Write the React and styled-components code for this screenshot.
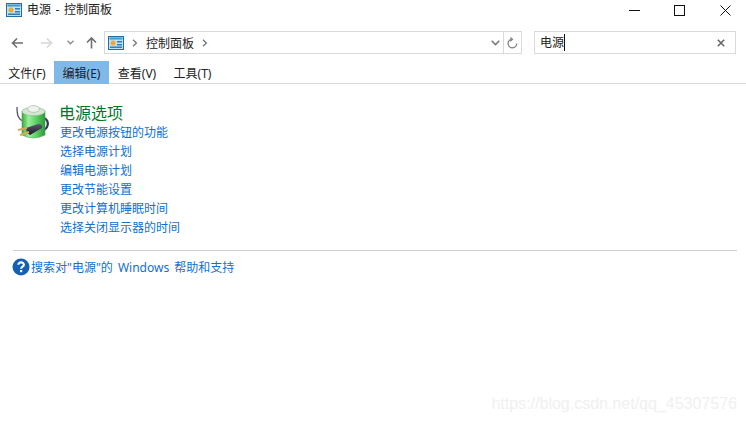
import styled, { createGlobalStyle } from "styled-components";

const GlobalStyle = createGlobalStyle`
  html, body {
    margin: 0;
    padding: 0;
    background: #fff;
  }
  body {
    font-family: "Noto Sans", "Noto Sans CJK SC", sans-serif;
    font-size: 12px;
    color: #1a1a1a;
  }
`;

const Window = styled.div`
  position: relative;
  width: 746px;
  height: 421px;
  overflow: hidden;
  background: #fff;
`;

const TitleBar = styled.div`
  display: flex;
  align-items: center;
  height: 20px;
  padding-left: 6px;
  gap: 5px;
`;

const TitleText = styled.span`
  font-size: 12px;
  line-height: 20px;
  color: #222;
  flex: 1;
  word-spacing: 1.5px;
`;

const WindowButtons = styled.div`
  display: flex;
  margin-right: -2px;
`;

const WindowButton = styled.div`
  width: 45.5px;
  height: 20px;
  display: flex;
  align-items: center;
  justify-content: center;
`;

const NavRow = styled.div`
  display: flex;
  align-items: center;
  height: 23px;
  margin-top: 11px;
`;

const NavArrows = styled.div`
  display: flex;
  align-items: center;
  flex: none;
  width: 104px;
  padding-left: 8px;
  box-sizing: border-box;
`;

const NavArrow = styled.div`
  width: ${(props) => props.w}px;
  margin-left: ${(props) => props.gap || 0}px;
  height: 23px;
  display: flex;
  align-items: center;
  justify-content: center;
`;

const AddressBox = styled.div`
  display: flex;
  align-items: center;
  width: 418px;
  height: 23px;
  box-sizing: border-box;
  border: 1px solid #d9d9d9;
  padding-left: 3px;
`;

const Crumb = styled.span`
  font-size: 12px;
  color: #222;
  margin: 0 8px;
`;

const Chevron = styled.svg`
  margin-left: ${(props) => props.gap || 0}px;
`;

const Spacer = styled.div`
  flex: 1;
`;

const RefreshCell = styled.div`
  width: 17px;
  height: 21px;
  border-left: 1px solid #d9d9d9;
  display: flex;
  align-items: center;
  justify-content: center;
`;

const DropCell = styled.div`
  width: 16px;
  display: flex;
  align-items: center;
  justify-content: center;
`;

const SearchBox = styled.div`
  display: flex;
  align-items: center;
  width: 202px;
  height: 23px;
  margin-left: 12px;
  box-sizing: border-box;
  border: 1px solid #d9d9d9;
  padding: 0 10px 0 5px;
`;

const SearchText = styled.span`
  font-size: 12px;
  color: #222;
  line-height: 17px;
  border-right: 1px solid #111;
`;

const MenuBar = styled.div`
  display: flex;
  height: 23px;
  box-sizing: border-box;
  margin-top: 7px;
  border-bottom: 1px solid #dcdcdc;
`;

const MenuItem = styled.div`
  width: ${(props) => props.w}px;
  height: 23px;
  display: flex;
  align-items: center;
  justify-content: center;
  font-size: 12px;
  color: #222;
  background: ${(props) => (props.active ? "#7fb9ea" : "transparent")};
`;

const Content = styled.div`
  padding: 19px 9px 0 13px;
`;

const Group = styled.div`
  display: flex;
  height: 147px;
`;

const BigIcon = styled.div`
  width: 47px;
  flex: none;
  padding: 1px 0 0 2px;
  box-sizing: border-box;
`;

const GroupBody = styled.div`
  display: flex;
  flex-direction: column;
`;

const GroupTitle = styled.div`
  font-size: 16px;
  line-height: 20px;
  height: 20px;
  margin-left: -1px;
  color: #00782a;
`;

const TaskLink = styled.a`
  font-size: 12px;
  line-height: 19px;
  color: #0f6fd1;
`;

const Rule = styled.div`
  height: 1px;
  background: #cfcfcf;
`;

const HelpRow = styled.div`
  display: flex;
  align-items: center;
  gap: 1px;
  margin-top: 7px;
  margin-left: -1px;
  height: 18px;
`;

const HelpLink = styled.a`
  font-size: 12px;
  color: #0f6fd1;
  word-spacing: 2px;
`;

const Watermark = styled.div`
  position: absolute;
  right: 9px;
  bottom: 8px;
  font-family: "Liberation Sans", sans-serif;
  font-size: 16px;
  color: #f0f0f0;
`;

function PanelIcon({ size = 16 }) {
  return (
    <svg width={size} height={size * 0.875} viewBox="0 0 16 14">
      <rect x="0.5" y="0.5" width="15" height="13" fill="#bfe0f5" stroke="#1f6f9f" />
      <rect x="1.5" y="1.5" width="13" height="2" fill="#3f9ad0" />
      <circle cx="5" cy="7" r="2.5" fill="#f0a92e" />
      <rect x="9" y="5" width="5" height="1.5" fill="#2f7fb8" />
      <rect x="9" y="8" width="5" height="1.5" fill="#2f7fb8" />
      <rect x="2" y="10.5" width="12" height="1.5" fill="#2f7fb8" />
    </svg>
  );
}

function BatteryIcon() {
  return (
    <svg width="35" height="37" viewBox="0 0 35 37">
      <defs>
        <linearGradient id="cell" x1="0" x2="1" y1="0" y2="0">
          <stop offset="0" stopColor="#3aa83c" />
          <stop offset="0.28" stopColor="#9af09a" />
          <stop offset="0.6" stopColor="#5fd265" />
          <stop offset="1" stopColor="#2c9a38" />
        </linearGradient>
        <linearGradient id="plug" x1="0" x2="0" y1="0" y2="1">
          <stop offset="0" stopColor="#5a5a70" />
          <stop offset="1" stopColor="#1a1a28" />
        </linearGradient>
      </defs>
      <path d="M2 3 C2 11 3 15 8 17" fill="none" stroke="#55556e" strokeWidth="1.3" />
      <path d="M29 14 C35 17 34 26 25 27" fill="none" stroke="#35355a" strokeWidth="2.2" />
      <path d="M7 7 L7 31 Q18 37 30 31 L30 7 Z" fill="url(#cell)" stroke="#4f9f4f" strokeWidth="0.6" />
      <ellipse cx="18.5" cy="7.5" rx="11.5" ry="4.2" fill="#cfe8cf" stroke="#8fb08f" strokeWidth="0.6" />
      <ellipse cx="18.5" cy="5" rx="6" ry="3.4" fill="#eef2ee" stroke="#a0a8a0" strokeWidth="0.6" />
      <path d="M11 24 L23 20 Q28 20 27 24 L15 31 Q11 29 11 24 Z" fill="url(#plug)" />
      <path d="M3 26 L12 24 M5 31 L14 28" stroke="#d0a95a" strokeWidth="2.2" />
    </svg>
  );
}

function HelpIcon() {
  return (
    <svg width="18" height="18" viewBox="0 0 18 18">
      <circle cx="9" cy="9" r="8.5" fill="#1560b0" />
      <path d="M6.3 6.8 C6.3 3.6 11.9 3.6 11.9 6.8 C11.9 8.8 9.1 8.6 9.1 10.8" fill="none" stroke="#fff" strokeWidth="2.1" />
      <rect x="8" y="12" width="2.2" height="2.2" fill="#fff" />
    </svg>
  );
}

const tasks = [
  "更改电源按钮的功能",
  "选择电源计划",
  "编辑电源计划",
  "更改节能设置",
  "更改计算机睡眠时间",
  "选择关闭显示器的时间",
];

export default function App() {
  return (
    <Window>
      <GlobalStyle />
      <TitleBar>
        <PanelIcon />
        <TitleText>电源 - 控制面板</TitleText>
        <WindowButtons>
          <WindowButton>
            <svg width="11" height="11" viewBox="0 0 11 11"><path d="M0 5.5H11" stroke="#111" /></svg>
          </WindowButton>
          <WindowButton>
            <svg width="11" height="11" viewBox="0 0 11 11"><rect x="0.5" y="0.5" width="10" height="10" fill="none" stroke="#111" /></svg>
          </WindowButton>
          <WindowButton>
            <svg width="11" height="11" viewBox="0 0 11 11"><path d="M0.5 0.5L10.5 10.5M10.5 0.5L0.5 10.5" stroke="#111" /></svg>
          </WindowButton>
        </WindowButtons>
      </TitleBar>
      <NavRow>
        <NavArrows>
          <NavArrow w={18}>
            <svg width="13" height="12" viewBox="0 0 13 12"><path d="M12 6H2M6 1.5L1.5 6L6 10.5" fill="none" stroke="#6f6f6f" strokeWidth="1.6" /></svg>
          </NavArrow>
          <NavArrow w={40}>
            <svg width="13" height="12" viewBox="0 0 13 12"><path d="M1 6H11M7 1.5L11.5 6L7 10.5" fill="none" stroke="#d6d6d6" strokeWidth="1.6" /></svg>
          </NavArrow>
          <NavArrow w={8}>
            <svg width="7" height="5" viewBox="0 0 7 5"><path d="M0.5 0.8L3.5 3.8L6.5 0.8" fill="none" stroke="#8a8a8a" strokeWidth="1.3" /></svg>
          </NavArrow>
          <NavArrow w={26} gap={4}>
            <svg width="13" height="13" viewBox="0 0 13 13"><path d="M6.5 12.5V2M2 6.5L6.5 2L11 6.5" fill="none" stroke="#6f6f6f" strokeWidth="1.6" /></svg>
          </NavArrow>
        </NavArrows>
        <AddressBox>
          <PanelIcon />
          <Chevron gap={8} width="6" height="8" viewBox="0 0 6 8"><path d="M1 0.8L4.4 4L1 7.2" fill="none" stroke="#777" strokeWidth="1.3" /></Chevron>
          <Crumb>控制面板</Crumb>
          <Chevron width="6" height="8" viewBox="0 0 6 8"><path d="M1 0.8L4.4 4L1 7.2" fill="none" stroke="#777" strokeWidth="1.3" /></Chevron>
          <Spacer />
          <DropCell>
            <svg width="9" height="6" viewBox="0 0 9 6"><path d="M0.7 0.8L4.5 4.6L8.3 0.8" fill="none" stroke="#777" strokeWidth="1.5" /></svg>
          </DropCell>
          <RefreshCell>
            <svg width="11" height="12" viewBox="0 0 11 12"><path d="M5 2.2A4.3 4.3 0 1 0 9.7 6.5M3.4 0.5L5.4 2.3L3.4 4.2" fill="none" stroke="#8a8a8a" strokeWidth="1.4" /></svg>
          </RefreshCell>
        </AddressBox>
        <SearchBox>
          <SearchText>电源</SearchText>
          <Spacer />
          <svg width="8" height="8" viewBox="0 0 8 8"><path d="M0.8 0.8L7.2 7.2M7.2 0.8L0.8 7.2" stroke="#666" strokeWidth="1.6" /></svg>
        </SearchBox>
      </NavRow>
      <MenuBar>
        <MenuItem w={54}>文件(F)</MenuItem>
        <MenuItem w={55} active>编辑(E)</MenuItem>
        <MenuItem w={56}>查看(V)</MenuItem>
        <MenuItem w={55}>工具(T)</MenuItem>
      </MenuBar>
      <Content>
        <Group>
          <BigIcon><BatteryIcon /></BigIcon>
          <GroupBody>
            <GroupTitle>电源选项</GroupTitle>
            {tasks.map((task) => (
              <TaskLink key={task}>{task}</TaskLink>
            ))}
          </GroupBody>
        </Group>
        <Rule />
        <HelpRow>
          <HelpIcon />
          <HelpLink>搜索对"电源"的 Windows 帮助和支持</HelpLink>
        </HelpRow>
      </Content>
      <Watermark>https://blog.csdn.net/qq_45307576</Watermark>
    </Window>
  );
}
